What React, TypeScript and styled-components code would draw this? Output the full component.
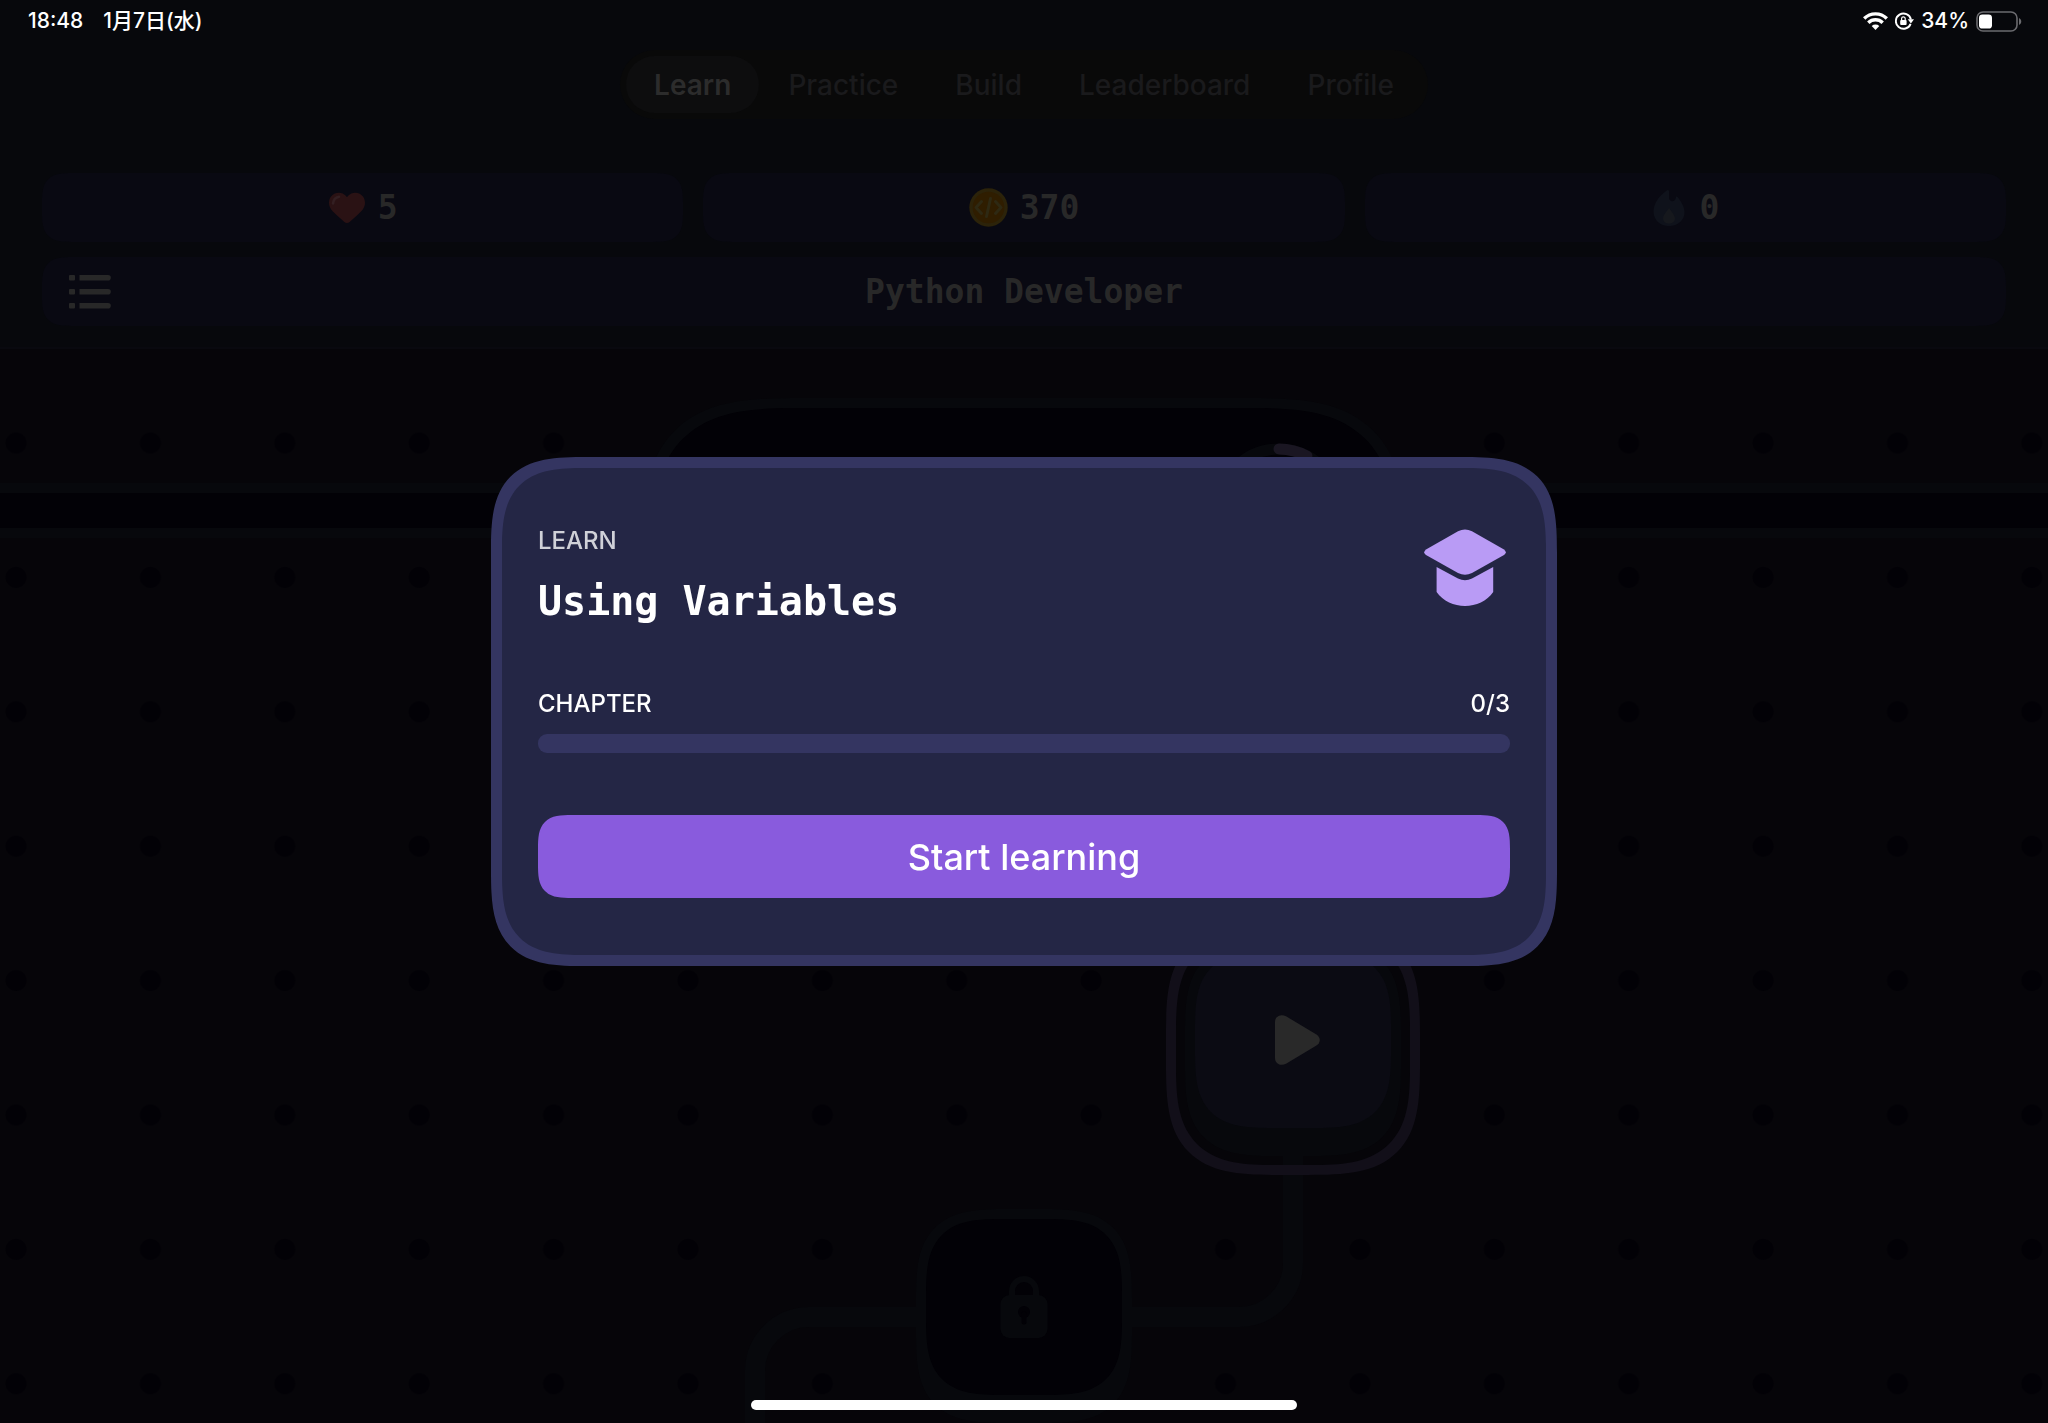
import React from "react";
import styled, { createGlobalStyle, css } from "styled-components";

const color = {
  header: "#07080c",
  map: "#060509",
  line: "#07080c",
  hole: "#020106",
  panel: "#090912",
  dim: "#282828",
  dimmer: "#1a1a1c",
  card: "#242645",
  cardEdge: "#343561",
  accent: "#895bdd",
  lilac: "#b99bf5",
};

const sans = `Inter, "Noto Sans CJK JP", sans-serif`;
const mono = `"DejaVu Sans Mono", monospace`;

// Continuous corners where the browser has them, round ones elsewhere.
const smoothCorner = (round: number, smooth: number) => css`
  border-radius: ${round}px;
  @supports (corner-shape: superellipse(1.6)) {
    border-radius: ${smooth}px;
    corner-shape: superellipse(1.6);
  }
`;

const GlobalStyle = createGlobalStyle`
  *, *::before, *::after { box-sizing: border-box; }
  body { margin: 0; background: ${color.map}; font-family: ${sans}; }
  button { border: 0; padding: 0; background: none; font: inherit; color: inherit; cursor: pointer; }
  h1, h2, p { margin: 0; }
  svg { display: block; flex: none; }
`;

const Screen = styled.div`
  display: flex;
  flex-direction: column;
  min-height: 100vh;
`;

const Header = styled.header`
  display: flex;
  flex-direction: column;
  background: ${color.header};
  border-bottom: 2px solid #09090f;
  padding-bottom: 21px;
`;

const StatusBar = styled.div`
  display: flex;
  align-items: center;
  justify-content: space-between;
  height: 42px;
  padding: 0 26px 0 28px;
  color: #fff;
  font-size: 21px;
  line-height: 24px;
  font-weight: 500;
`;

const StatusGroup = styled.div<{ $gap: number }>`
  display: flex;
  align-items: center;
  gap: ${(p) => p.$gap}px;
`;

const TabBar = styled.nav`
  display: flex;
  align-self: center;
  gap: 1px;
  margin-top: 8px;
  padding: 6px;
  border-radius: 35px;
  background: #090909;
`;

const Tab = styled.button<{ $active?: boolean }>`
  height: 57px;
  padding: 0 28px;
  border-radius: 29px;
  font-size: 28px;
  line-height: 34px;
  font-weight: ${(p) => (p.$active ? 600 : 500)};
  color: ${(p) => (p.$active ? "#2c2c2c" : color.dimmer)};
  background: ${(p) => (p.$active ? "#0d0d0e" : "transparent")};
`;

const Stats = styled.div`
  display: grid;
  grid-template-columns: repeat(3, 1fr);
  gap: 20px;
  margin: 54px 42px 15px;
`;

const Stat = styled.div`
  display: flex;
  align-items: center;
  justify-content: center;
  gap: 12px;
  height: 69px;
  ${smoothCorner(22, 30)}
  background: ${color.panel};
  color: ${color.dim};
  font: 700 33px/40px ${mono};
`;

const CourseBar = styled.div`
  display: grid;
  grid-template-columns: 48px 1fr 48px;
  align-items: center;
  height: 69px;
  margin: 0 42px;
  padding: 0 27px;
  ${smoothCorner(22, 30)}
  background: ${color.panel};
  color: ${color.dim};
`;

const CourseTitle = styled.h1`
  text-align: center;
  font: 700 33px/40px ${mono};
`;

const LessonMap = styled.main`
  position: relative;
  flex: 1;
  overflow: hidden;
  background-color: ${color.map};
  background-image: radial-gradient(circle at 16px 94px, ${color.hole} 10px, transparent 11px);
  background-size: 6.5625vw 6.5625vw;
`;

const Road = styled.div`
  position: absolute;
  top: 134px;
  left: 0;
  right: 0;
  height: 55px;
  border: solid ${color.line};
  border-width: 10px 0;
  background: ${color.hole};
`;

const Board = styled.div`
  position: absolute;
  top: 0;
  bottom: 0;
  left: 50%;
  width: 800px;
  margin-left: -400px;
`;

const Banner = styled.div`
  position: absolute;
  top: 49px;
  left: 18px;
  right: 18px;
  height: 340px;
  border: 10px solid ${color.line};
  ${smoothCorner(110, 160)}
  background: ${color.hole};
`;

const Drawing = styled.svg`
  position: absolute;
  top: 0;
  left: 0;
`;

const NodeSpot = styled.div<{ $x: number; $y: number }>`
  position: absolute;
  left: ${(p) => p.$x}px;
  top: ${(p) => p.$y}px;
`;

const FocusRing = styled.div`
  padding: 9px;
  border: 10px solid #120f19;
  ${smoothCorner(76, 112)}
`;

const LessonNode = styled.button`
  display: flex;
  align-items: center;
  justify-content: center;
  width: 216px;
  height: 214px;
  ${smoothCorner(62, 92)}
  padding: 10px 10px 28px;
  background: ${color.line};
`;

const NodeFace = styled.span<{ $locked?: boolean }>`
  display: flex;
  align-items: center;
  justify-content: center;
  width: 100%;
  height: 100%;
  ${smoothCorner(52, 78)}
  background: ${(p) => (p.$locked ? color.hole : "#0b0b13")};
`;

const Overlay = styled.div`
  position: fixed;
  inset: 0;
  display: flex;
  align-items: center;
  justify-content: center;
`;

const Card = styled.section`
  display: flex;
  flex-direction: column;
  width: min(1066px, 92vw);
  padding: 57px 36px;
  border: 11px solid ${color.cardEdge};
  ${smoothCorner(64, 96)}
  background: ${color.card};
  color: #fff;
`;

const CardHead = styled.div`
  display: flex;
  align-items: flex-start;
  justify-content: space-between;
  padding-top: 4px;
`;

const Titles = styled.div`
  display: flex;
  flex-direction: column;
  gap: 22px;
`;

const Kicker = styled.p`
  font-size: 24px;
  line-height: 24px;
  font-weight: 500;
  color: #d0d1d8;
`;

const LessonTitle = styled.h2`
  font: 700 40px/52px ${mono};
`;

const ProgressRow = styled.div`
  display: flex;
  justify-content: space-between;
  margin-top: 65px;
  font-size: 24px;
  line-height: 24px;
  font-weight: 500;
`;

const Track = styled.div`
  height: 19px;
  margin: 18px 0 62px;
  border-radius: 9px;
  background: ${color.cardEdge};
`;

const StartButton = styled.button`
  height: 83px;
  ${smoothCorner(24, 34)}
  background: ${color.accent};
  color: #fff;
  font-size: 36px;
  line-height: 44px;
  font-weight: 500;
`;

const HomeIndicator = styled.div`
  position: fixed;
  bottom: 13px;
  left: 50%;
  width: 546px;
  height: 10px;
  margin-left: -273px;
  border-radius: 5px;
  background: #fff;
`;

const WifiIcon = () => (
  <svg width="25" height="18" viewBox="0 0 25 18" fill="none" stroke="#fff" strokeWidth="3.4">
    <path d="M1.200 6.500a16 16 0 0 1 22.600 0" />
    <path d="M5.300 10.800a10.200 10.200 0 0 1 14.400 0" />
    <path d="M12.500 18l-3.800-4a5.600 5.600 0 0 1 7.600 0z" fill="#fff" stroke="none" />
  </svg>
);

const RotationLockIcon = () => (
  <svg width="19" height="18" viewBox="0 0 19 18" fill="none">
    <path d="M15.600 11.800A7.600 7.600 0 1 1 15.900 7.500" stroke="#fff" strokeWidth="1.900" />
    <path d="M12.800 7.200h6.200l-3.100 4.300z" fill="#fff" />
    <rect x="5.200" y="8" width="6.400" height="5" rx="1" fill="#fff" />
    <path d="M6.600 8V6.600a1.800 1.800 0 0 1 3.600 0V8" stroke="#fff" strokeWidth="1.200" />
  </svg>
);

const BatteryIcon = () => (
  <svg width="46" height="21" viewBox="0 0 46 21">
    <rect x="1" y="1" width="40" height="19" rx="6" fill="none" stroke="#6b6b6f" strokeWidth="1.600" />
    <rect x="3" y="3.400" width="13" height="14.200" rx="3.400" fill="#fff" />
    <path d="M43 7c3 1.400 3 5.600 0 7z" fill="#6b6b6f" />
  </svg>
);

const HeartIcon = () => (
  <svg width="38" height="32" viewBox="0 0 38 32">
    <path
      d="M19 5.200C16.400 1.600 13 .8 10.600.8 5.200.8 1 5.200 1 10.700c0 4.800 3 7.900 6.200 11l9.200 8.200c1.600 1.500 3.600 1.500 5.200 0l9.200-8.200c3.200-3.100 6.200-6.200 6.200-11C37 5.200 32.800.8 27.400.8c-2.400 0-5.800.8-8.400 4.400z"
      fill="#2a1214"
    />
    <path d="M5 11.500c.4-3.600 2.600-6 6-6.700" stroke="#331f22" strokeWidth="2.600" fill="none" strokeLinecap="round" />
  </svg>
);

const CoinIcon = () => (
  <svg width="39" height="39" viewBox="0 0 39 39">
    <circle cx="19.500" cy="19.500" r="19.200" fill="#2c230a" />
    <circle cx="19.500" cy="19.500" r="15.800" fill="#2f1d00" />
    <path
      d="M12.500 13.500l-5.500 6 5.500 6M26.500 13.500l5.500 6-5.500 6M21.500 10.500l-4 18"
      fill="none"
      stroke="#2e2913"
      strokeWidth="3"
      strokeLinecap="round"
      strokeLinejoin="round"
    />
  </svg>
);

const FlameIcon = () => (
  <svg width="36" height="38" viewBox="0 0 36 38">
    <path
      d="M16 1.200c1-.8 2 0 2 1.200v6.400c0 4.600 6.600 4.600 6.800 0 .1-1.600 1.300-1.600 2.200-.2C31 14 33.500 18 33.500 23.500 33.500 31 27 37 18 37S2.500 31 2.500 22.500C2.500 14 9 6 16 1.200z"
      fill="#0f121b"
    />
    <path d="M18 19c2.600 4 6 7 6 10.500 0 3-2.600 5-6 5s-6-2-6-5c0-3.500 3.400-6.500 6-10.500z" fill="#16181d" />
  </svg>
);

const ListIcon = () => (
  <svg width="42" height="34" viewBox="0 0 42 34" fill={color.dim}>
    {[0, 14, 28].map((y) => (
      <g key={y}>
        <rect x="0" y={y} width="6" height="5.600" rx="1" />
        <path d={`M10.500 ${y}H39a2.800 2.800 0 0 1 0 5.600H10.500z`} />
      </g>
    ))}
  </svg>
);

const PlayIcon = () => (
  <svg width="64" height="50" viewBox="-14 0 64 50">
    <path d="M0 7C0 1 6-1.500 11 1.300l30 17.900c5 3 5 8.600 0 11.600L11 48.700C6 51.500 0 49 0 43z" fill="#292929" />
  </svg>
);

const LockIcon = () => (
  <svg width="48" height="62" viewBox="0 0 48 62">
    <path d="M12 22V15a12 12 0 0 1 24 0v7" fill="none" stroke={color.line} strokeWidth="6" />
    <rect x="0.500" y="19" width="47" height="43" rx="9" fill={color.line} />
    <circle cx="24" cy="36" r="6" fill={color.hole} />
    <path d="M24 38v8" stroke={color.hole} strokeWidth="5" strokeLinecap="round" />
  </svg>
);

const CapIcon = () => (
  <svg width="90" height="78" viewBox="0 0 90 78" fill={color.lilac}>
    <path d="M38 2.200Q45-1.400 52 2.200L84 20.400Q87.500 23.200 84 26L52 44Q45 47.600 38 44L6 26Q2.500 23.200 6 20.400z" />
    <path d="M16.600 38L38 49.600Q45 53 52 49.600L73.200 38V63C67 72 56 77 45 77S23 72 16.600 63z" />
  </svg>
);

const tabs = ["Learn", "Practice", "Build", "Leaderboard", "Profile"];

export default function App() {
  return (
    <Screen>
      <GlobalStyle />
      <Header>
        <StatusBar>
          <StatusGroup $gap={20}>
            <span>18:48</span>
            <span>1月7日(水)</span>
          </StatusGroup>
          <StatusGroup $gap={7}>
            <WifiIcon />
            <RotationLockIcon />
            <span>34%</span>
            <BatteryIcon />
          </StatusGroup>
        </StatusBar>
        <TabBar aria-label="Sections">
          {tabs.map((name, i) => (
            <Tab key={name} $active={i === 0}>
              {name}
            </Tab>
          ))}
        </TabBar>
        <Stats>
          <Stat>
            <HeartIcon />5
          </Stat>
          <Stat>
            <CoinIcon />370
          </Stat>
          <Stat>
            <FlameIcon />0
          </Stat>
        </Stats>
        <CourseBar>
          <button aria-label="Course list">
            <ListIcon />
          </button>
          <CourseTitle>Python Developer</CourseTitle>
        </CourseBar>
      </Header>

      <LessonMap>
        <Road />
        <Board>
          <Banner />
          <Drawing width="800" height="1100" viewBox="0 0 800 1100" fill="none">
            <circle cx="655" cy="161" r="61" stroke={color.line} strokeWidth="11" />
            <path d="M655 100a61 61 0 0 1 28 7" stroke="#1a1622" strokeWidth="11" strokeLinecap="round" />
            <path
              d="M669 790V914A54 54 0 0 1 615 968H185A54 54 0 0 0 131 1022V1100"
              stroke={color.line}
              strokeWidth="20"
            />
          </Drawing>
          <NodeSpot $x={542} $y={574}>
            <FocusRing>
              <LessonNode aria-label="Using Variables">
                <NodeFace>
                  <PlayIcon />
                </NodeFace>
              </LessonNode>
            </FocusRing>
          </NodeSpot>
          <NodeSpot $x={292} $y={860}>
            <LessonNode aria-label="Locked lesson">
              <NodeFace $locked>
                <LockIcon />
              </NodeFace>
            </LessonNode>
          </NodeSpot>
        </Board>
      </LessonMap>

      <Overlay>
        <Card role="dialog" aria-labelledby="lesson-title">
          <CardHead>
            <Titles>
              <Kicker>LEARN</Kicker>
              <LessonTitle id="lesson-title">Using Variables</LessonTitle>
            </Titles>
            <CapIcon />
          </CardHead>
          <ProgressRow>
            <span id="chapter-label">CHAPTER</span>
            <span>0/3</span>
          </ProgressRow>
          <Track role="progressbar" aria-labelledby="chapter-label" aria-valuemin={0} aria-valuemax={3} aria-valuenow={0} />
          <StartButton>Start learning</StartButton>
        </Card>
      </Overlay>
      <HomeIndicator />
    </Screen>
  );
}
